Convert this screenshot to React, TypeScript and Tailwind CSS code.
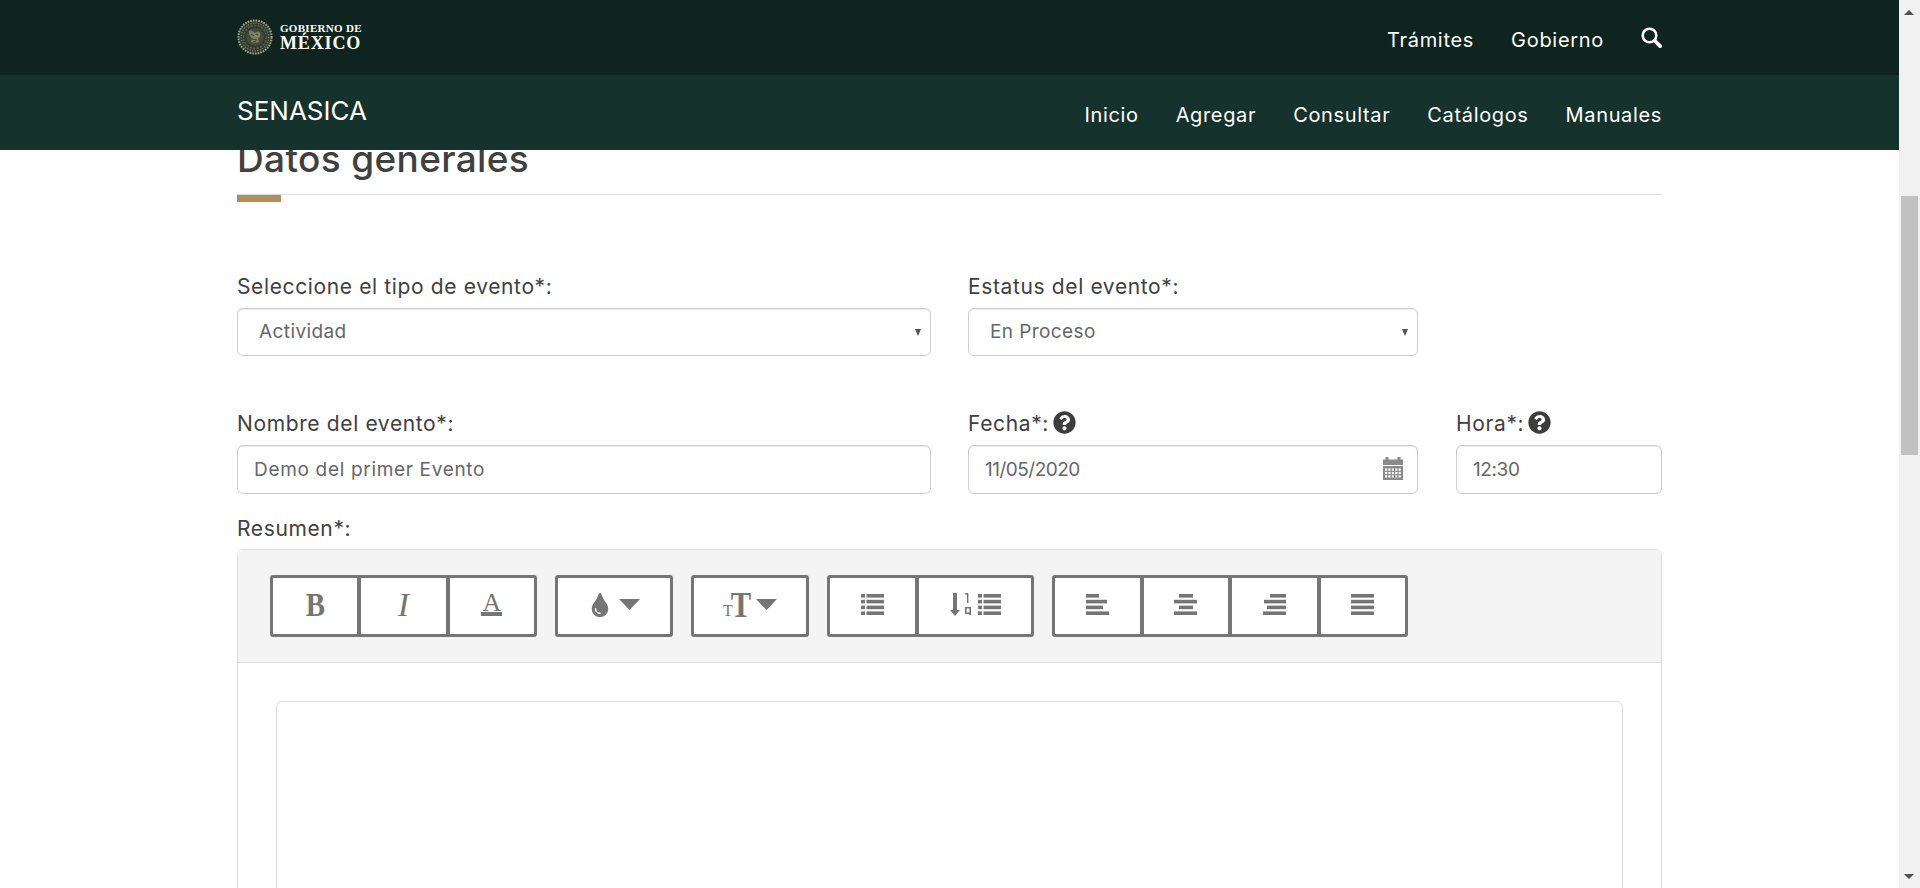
import type { ReactNode } from 'react';
import { FaQuestionCircle, FaTint } from 'react-icons/fa';

const BARS: Record<string, [number, number][]> = {
  left: [[0, 13], [0, 21], [0, 17], [0, 23]],
  center: [[5, 14], [0, 23], [5, 14], [0, 23]],
  right: [[7, 16], [1, 22], [4, 19], [0, 23]],
  justify: [[0, 23], [0, 23], [0, 23], [0, 23]],
};

function AlignIcon({ kind }: { kind: string }) {
  return (
    <svg width="23" height="21" viewBox="0 0 23 21" fill="#757575">
      {BARS[kind].map(([x, w], i) => (
        <rect key={i} x={x} y={i * 5.8} width={w} height="3.6" />
      ))}
    </svg>
  );
}

function ListBars() {
  return (
    <svg width="23" height="21" viewBox="0 0 23 21" fill="#757575">
      {[0, 1, 2, 3].map((i) => (
        <g key={i}>
          <rect x="0" y={i * 5.8} width="4" height="3.6" />
          <rect x="5.5" y={i * 5.8} width="17.5" height="3.6" />
        </g>
      ))}
    </svg>
  );
}

function SortNumIcon() {
  return (
    <svg width="21" height="23" viewBox="0 0 21 23" fill="#757575">
      <rect x="3" y="0" width="4" height="18" />
      <path d="M0 17h10l-5 6z" />
      <path d="M15 0h3.4v10H17V1.6h-2z" />
      <path fillRule="evenodd" d="M15 14h6v8h-1.6v-1H15zm1.6 1.6v3.8h2.8v-3.8z" />
    </svg>
  );
}

function CalendarIcon() {
  const cells = [];
  for (let r = 0; r < 3; r++) {
    for (let c = 0; c < 5; c++) {
      cells.push(<rect key={`${r}-${c}`} x={2 + c * 3.4} y={11.5 + r * 3.4} width="2.2" height="2.2" fill="#ffffff" />);
    }
  }
  return (
    <svg width="20" height="23" viewBox="0 0 20 23" fill="#8a8a8a">
      <rect x="2.5" y="0" width="3" height="3" />
      <rect x="14.5" y="0" width="3" height="3" />
      <rect x="0" y="2.5" width="20" height="5.5" />
      <rect x="0" y="9" width="20" height="14" />
      {cells}
    </svg>
  );
}

function SearchIcon() {
  return (
    <svg width="21" height="21" viewBox="0 0 21 21" fill="none" stroke="#ffffff">
      <circle cx="8.5" cy="8.5" r="6.8" strokeWidth="2.6" />
      <path d="M13.5 13.5l5.6 5.6" strokeWidth="3.8" strokeLinecap="round" />
    </svg>
  );
}

function Caret() {
  return (
    <svg width="21" height="11" viewBox="0 0 21 11" fill="#757575">
      <path d="M0 0h21L10.5 11z" />
    </svg>
  );
}

function Group({ width, children }: { width: string; children: ReactNode }) {
  return (
    <div className={`flex h-[62px] border-[3px] border-[#757575] rounded-[3px] bg-white divide-x-[4px] divide-[#757575] ${width}`}>
      {children}
    </div>
  );
}

function Btn({ children, className = 'flex-1' }: { children: ReactNode; className?: string }) {
  return <button className={`flex items-center justify-center pb-[3px] text-[#757575] ${className}`}>{children}</button>;
}

function Emblem() {
  return (
    <svg width="36" height="36" viewBox="0 0 36 36" fill="none">
      <circle cx="18" cy="18" r="17" fill="#2f3b30" />
      <circle cx="18" cy="18" r="16.6" stroke="#a3a184" strokeWidth="2" strokeDasharray="1.6 1.1" />
      <circle cx="18" cy="18" r="13.8" stroke="#7c7d62" strokeWidth="1.4" strokeDasharray="1.2 1.4" />
      <circle cx="18" cy="18" r="11.4" stroke="#5f6250" strokeWidth="1.4" strokeDasharray="2.2 1.3" />
      <circle cx="18" cy="18" r="9" fill="#444a3c" />
      <path d="M12 12c2-1 4 0 6 2 2-2 4-2 5 0 1 3-1 5-2 6l1 3c-3 1-6 1-8 0l1-4c-2-1-3-4-3-7z" fill="#7f8067" />
      <path d="M14 15l3 2m2-2l2 1m-6 4l5 1m-4 2l3-1" stroke="#3a4034" strokeWidth="1" />
    </svg>
  );
}

function Label({ children, help }: { children: ReactNode; help?: boolean }) {
  return (
    <div className="flex items-center gap-[4px] h-[37px] pb-[5px] text-[21px] tracking-[0.63px] text-[#404041]">
      <span>{children}</span>
      {help && <FaQuestionCircle className="text-[#3d3d3d] -mt-[4px]" size={23} />}
    </div>
  );
}

function SelectBox({ value }: { value: string }) {
  return (
    <div className="relative flex items-center h-[48px] pl-[21px] border border-[#cccccc] rounded-[6px] text-[19px] tracking-[0.4px] text-[#66666c] shadow-[inset_0_1px_1px_rgba(0,0,0,0.075)]">
      {value}
      <span className="absolute right-[9px] top-[20px] w-0 h-0 border-x-[3.5px] border-x-transparent border-t-[7px] border-t-[#555555]" />
    </div>
  );
}

function InputBox({ value, spacing, children }: { value: string; spacing: string; children?: ReactNode }) {
  return (
    <div className={`relative flex items-center h-[49px] pl-[16px] pt-[1px] border border-[#cccccc] rounded-[6px] text-[19px] text-[#66666c] shadow-[inset_0_1px_1px_rgba(0,0,0,0.075)] ${spacing}`}>
      {value}
      {children}
    </div>
  );
}

export default function App() {
  return (
    <div className="flex h-[888px] w-full overflow-hidden bg-white font-['Inter',sans-serif]">
      <div className="flex flex-col flex-1 min-w-0">
        <header className="shrink-0 h-[75px] bg-[#0f241e]">
          <div className="mx-auto w-[1425px] h-full flex items-center justify-between">
            <div className="flex items-center gap-[7px] -mt-[1px]">
              <Emblem />
              <div className="font-['Liberation_Serif',serif] font-bold text-white">
                <div className="text-[11px] leading-[12px] tracking-[0.3px]">GOBIERNO DE</div>
                <div className="text-[18px] leading-[19px] tracking-[0.85px]">MÉXICO</div>
              </div>
            </div>
            <nav className="flex items-center gap-[37px] pt-[4px] text-[20px] tracking-[0.7px] text-white">
              <a>Trámites</a>
              <a>Gobierno</a>
              <span className="-mt-[4px]"><SearchIcon /></span>
            </nav>
          </div>
        </header>
        <div className="shrink-0 h-[75px] bg-[#16322c]">
          <div className="mx-auto w-[1425px] h-full flex justify-between text-white">
            <div className="pt-[16px] text-[26px]">SENASICA</div>
            <nav className="flex gap-[37px] pt-[25px] text-[20px] tracking-[0.65px]">
              <a>Inicio</a>
              <a>Agregar</a>
              <a>Consultar</a>
              <a>Catálogos</a>
              <a>Manuales</a>
            </nav>
          </div>
        </div>

        <main className="flex-1 min-h-0 overflow-hidden">
          <div className="mx-auto w-[1425px] -mt-[13px]">
            <h2 className="h-[57px] text-[37px] leading-[44px] font-medium tracking-[0.35px] text-[#404041]">Datos generales</h2>
            <div className="border-t border-[#dddddd]">
              <div className="w-[44px] h-[7px] bg-[#b38e5d]" />
            </div>

            <div className="grid grid-cols-[694px_450px_207px] gap-x-[37px] mt-[69px]">
              <div>
                <Label>Seleccione el tipo de evento*:</Label>
                <SelectBox value="Actividad" />
              </div>
              <div>
                <Label>Estatus del evento*:</Label>
                <SelectBox value="En Proceso" />
              </div>
            </div>

            <div className="grid grid-cols-[694px_450px_207px] gap-x-[37px] mt-[52px]">
              <div>
                <Label>Nombre del evento*:</Label>
                <InputBox value="Demo del primer Evento" spacing="tracking-[0.68px]" />
              </div>
              <div>
                <Label help>Fecha*:</Label>
                <InputBox value="11/05/2020" spacing="tracking-[-0.5px]">
                  <span className="absolute right-[14px] top-[11px]"><CalendarIcon /></span>
                </InputBox>
              </div>
              <div className="ml-[1px]">
                <Label help>Hora*:</Label>
                <InputBox value="12:30" spacing="tracking-[-0.4px]" />
              </div>
            </div>

            <div className="mt-[19px] -mb-[1px]">
              <Label>Resumen*:</Label>
            </div>
            <div className="border border-[#dddddd] rounded-t-[6px]">
              <div className="flex gap-[18px] h-[113px] pt-[25px] pl-[32px] bg-[#f4f4f4] border-b border-[#dddddd]">
                <Group width="w-[267px]">
                  <Btn><span className="font-['Liberation_Serif',serif] font-bold text-[34px] leading-none scale-x-[0.85]">B</span></Btn>
                  <Btn><span className="font-['Liberation_Serif',serif] italic text-[34px] leading-none">I</span></Btn>
                  <Btn>
                    <span className="flex flex-col items-center font-['Liberation_Serif',serif] text-[26px] leading-[19px]">
                      A
                      <span className="block w-[21px] h-[4px] bg-[#757575]" />
                    </span>
                  </Btn>
                </Group>
                <Group width="w-[118px]">
                  <Btn>
                    <span className="flex items-center gap-[7px]">
                      <FaTint size={24} />
                      <Caret />
                    </span>
                  </Btn>
                </Group>
                <Group width="w-[118px]">
                  <Btn>
                    <span className="flex items-center gap-[3px]">
                      <span className="flex items-end font-['Liberation_Serif',serif] leading-none">
                        <span className="text-[16px] w-[9px] mb-[4px]">T</span>
                        <span className="text-[36px] font-bold -ml-[3px] scale-x-[0.85]">T</span>
                      </span>
                      <Caret />
                    </span>
                  </Btn>
                </Group>
                <Group width="w-[207px]">
                  <Btn className="w-[89px] shrink-0"><ListBars /></Btn>
                  <Btn>
                    <span className="flex items-center gap-[7px]">
                      <SortNumIcon />
                      <ListBars />
                    </span>
                  </Btn>
                </Group>
                <Group width="w-[356px]">
                  <Btn><AlignIcon kind="left" /></Btn>
                  <Btn><AlignIcon kind="center" /></Btn>
                  <Btn><AlignIcon kind="right" /></Btn>
                  <Btn><AlignIcon kind="justify" /></Btn>
                </Group>
              </div>
              <div className="px-[38px] pt-[38px] h-[300px]">
                <div className="h-[400px] border border-[#dddddd] rounded-[6px]" />
              </div>
            </div>
          </div>
        </main>
      </div>

      <aside className="relative shrink-0 w-[21px] h-full bg-[#f1f1f1]">
        <span className="absolute left-[5px] top-[10px] w-0 h-0 border-x-[5px] border-x-transparent border-b-[5px] border-b-[#505050]" />
        <div className="absolute left-[2px] right-[2px] top-[196px] h-[259px] bg-[#c1c1c1]" />
        <span className="absolute left-[5px] bottom-[9px] w-0 h-0 border-x-[5px] border-x-transparent border-t-[5px] border-t-[#505050]" />
      </aside>
    </div>
  );
}
